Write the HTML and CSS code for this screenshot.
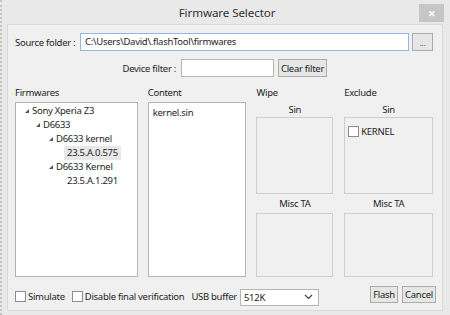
FILE: index.html
```html
<!DOCTYPE html>
<html>
<head>
<link rel="stylesheet" href="styles.css">
<meta charset="UTF-8">
<title>Firmware Selector</title>
</head>
<body>
<div class="window">
	<div class="titlebar">
		<span class="title">Firmware Selector</span>
		<span class="close">&#x2715;</span>
	</div>
	<div class="client">
		<div class="row source">
			<span class="lbl src_lbl">Source folder :</span>
			<div class="field src_field focus">C:\Users\David\.flashTool\firmwares</div>
			<div class="btn dots">...</div>
		</div>
		<div class="row filter">
			<span class="lbl filter_lbl">Device filter :</span>
			<div class="field filter_field"></div>
			<div class="btn clear">Clear filter</div>
		</div>
		<div class="panels">
			<div class="col firmwares">
				<div class="head">Firmwares</div>
				<div class="list tree">
					<div class="node lv0"><i class="arrow"></i>Sony Xperia Z3</div>
					<div class="node lv1"><i class="arrow"></i>D6633</div>
					<div class="node lv2"><i class="arrow"></i>D6633 kernel</div>
					<div class="node lv3"><span class="sel">23.5.A.0.575</span></div>
					<div class="node lv2"><i class="arrow"></i>D6633 Kernel</div>
					<div class="node lv3"><span>23.5.A.1.291</span></div>
				</div>
			</div>
			<div class="col content">
				<div class="head">Content</div>
				<div class="list files">
					<div class="file">kernel.sin</div>
				</div>
			</div>
			<div class="col wipe">
				<div class="head">Wipe</div>
				<div class="sub">Sin</div>
				<div class="group sin_box"></div>
				<div class="sub misc">Misc TA</div>
				<div class="group misc_box"></div>
			</div>
			<div class="col exclude">
				<div class="head">Exclude</div>
				<div class="sub">Sin</div>
				<div class="group sin_box">
					<div class="check_item"><span class="box"></span>KERNEL</div>
				</div>
				<div class="sub misc">Misc TA</div>
				<div class="group misc_box"></div>
			</div>
		</div>
		<div class="footer">
			<div class="check_item simulate"><span class="box"></span>Simulate</div>
			<div class="check_item verify"><span class="box"></span>Disable final verification</div>
			<span class="lbl usb_lbl">USB buffer</span>
			<div class="select">
				<span>512K</span>
				<svg width="9" height="6" viewBox="0 0 9 6"><path d="M1 1 L4.5 4.5 L8 1" fill="none" stroke="#444" stroke-width="1.2"/></svg>
			</div>
			<div class="btn flash">Flash</div>
			<div class="btn cancel">Cancel</div>
		</div>
	</div>
</div>
</body>
</html>
```
FILE: styles.css
```css
body {
	margin: 0;
	font-family: "Noto Sans", "Open Sans", sans-serif;
	font-size: 9.5px;
	letter-spacing: -0.28px;
	color: #1e1e1e;
}
.window {
	width: 450px;
	height: 315px;
	background: #e9e9e9;
	overflow: hidden;
	border-left: 2px dotted #c9c2b8;
	box-sizing: border-box;
}
.titlebar {
	height: 24px;
	display: flex;
	align-items: center;
	justify-content: center;
	position: relative;
}
.title {
	font-size: 11.6px;
	letter-spacing: -0.1px;
	color: #333;
	margin-left: 2px;
}
.close {
	position: absolute;
	right: 6px;
	top: 4px;
	width: 25px;
	height: 18px;
	background: #c6c6c6;
	color: #fff;
	font-size: 9px;
	display: flex;
	align-items: center;
	justify-content: center;
	font-weight: bold;
}
.client {
	margin-left: 5px;
	width: 436px;
	height: 287px;
	box-sizing: border-box;
	background: #f0f0f0;
	border: 1px solid #dadada;
	padding: 8px 9px 0 7px;
}
.row {
	display: flex;
	align-items: center;
	height: 18px;
}
.lbl {
	white-space: nowrap;
}
.src_lbl {
	width: 62px;
	margin-right: 3px;
}
.field {
	height: 18px;
	box-sizing: border-box;
	background: #fff;
	border: 1px solid #b5b5b5;
	padding: 0 4px;
	line-height: 16px;
	white-space: nowrap;
}
.field.focus {
	border-color: #8fb9e4;
}
.src_field {
	width: 329px;
}
.btn {
	box-sizing: border-box;
	background: #e6e6e6;
	border: 1px solid #acacac;
	display: flex;
	align-items: center;
	justify-content: center;
	white-space: nowrap;
}
.dots {
	width: 21px;
	height: 18px;
	margin-left: 3px;
	font-size: 8px;
	color: #555;
}
.filter {
	margin-top: 8px;
}
.filter_lbl {
	width: 161px;
	text-align: right;
	margin-right: 5px;
}
.filter_field {
	width: 93px;
}
.clear {
	width: 49px;
	height: 18px;
	margin-left: 4px;
}
.panels {
	display: flex;
	margin-top: 8px;
}
.col {
	display: flex;
	flex-direction: column;
}
.head {
	height: 17px;
	line-height: 16px;
}
.firmwares {
	width: 123px;
}
.content {
	width: 99px;
	margin-left: 10px;
}
.wipe {
	width: 77px;
	margin-left: 10px;
}
.exclude {
	width: 89px;
	margin-left: 11px;
}
.list {
	height: 175px;
	box-sizing: border-box;
	background: #fff;
	border: 1px solid #b4b4b4;
}
.tree {
	padding-top: 1px;
}
.node {
	height: 14px;
	line-height: 14px;
	display: flex;
	align-items: center;
	white-space: nowrap;
}
.arrow {
	width: 0;
	height: 0;
	border-bottom: 4px solid #555;
	border-left: 4px solid transparent;
	margin-right: 3px;
}
.lv0 { padding-left: 9px; }
.lv1 { padding-left: 20px; }
.lv2 { padding-left: 33px; }
.lv3 { padding-left: 48px; }
.lv3 span {
	padding: 0 3px;
}
.sel {
	background: #e8e8e8;
}
.files {
	padding: 3px 4px;
}
.sub {
	height: 15px;
	line-height: 15px;
	text-align: center;
}
.sub.misc {
	height: 19px;
	line-height: 19px;
}
.group {
	box-sizing: border-box;
	border: 1px solid #cdcdcd;
}
.sin_box {
	height: 77px;
	padding: 7px 3px;
}
.misc_box {
	height: 64px;
}
.check_item {
	display: flex;
	align-items: center;
	white-space: nowrap;
}
.box {
	width: 11px;
	height: 11px;
	box-sizing: border-box;
	background: #fff;
	border: 1px solid #8d8d8d;
	margin-right: 2px;
}
.footer {
	display: flex;
	align-items: center;
	height: 20px;
	margin-top: 8px;
}
.simulate {
	margin-top: 3px;
}
.verify {
	margin-left: 7px;
	margin-top: 3px;
}
.usb_lbl {
	margin-left: 7px;
	margin-top: 3px;
}
.select {
	width: 79px;
	height: 17px;
	box-sizing: border-box;
	margin-left: 3px;
	margin-top: 4px;
	background: #fff;
	border: 1px solid #b4b4b4;
	display: flex;
	align-items: center;
	justify-content: space-between;
	padding: 0 5px 0 3px;
}
.flash {
	margin-left: auto;
	width: 28px;
	height: 17px;
	margin-top: -2px;
}
.cancel {
	width: 34px;
	height: 17px;
	margin-left: 4px;
	margin-right: -3px;
	margin-top: -2px;
}
```
